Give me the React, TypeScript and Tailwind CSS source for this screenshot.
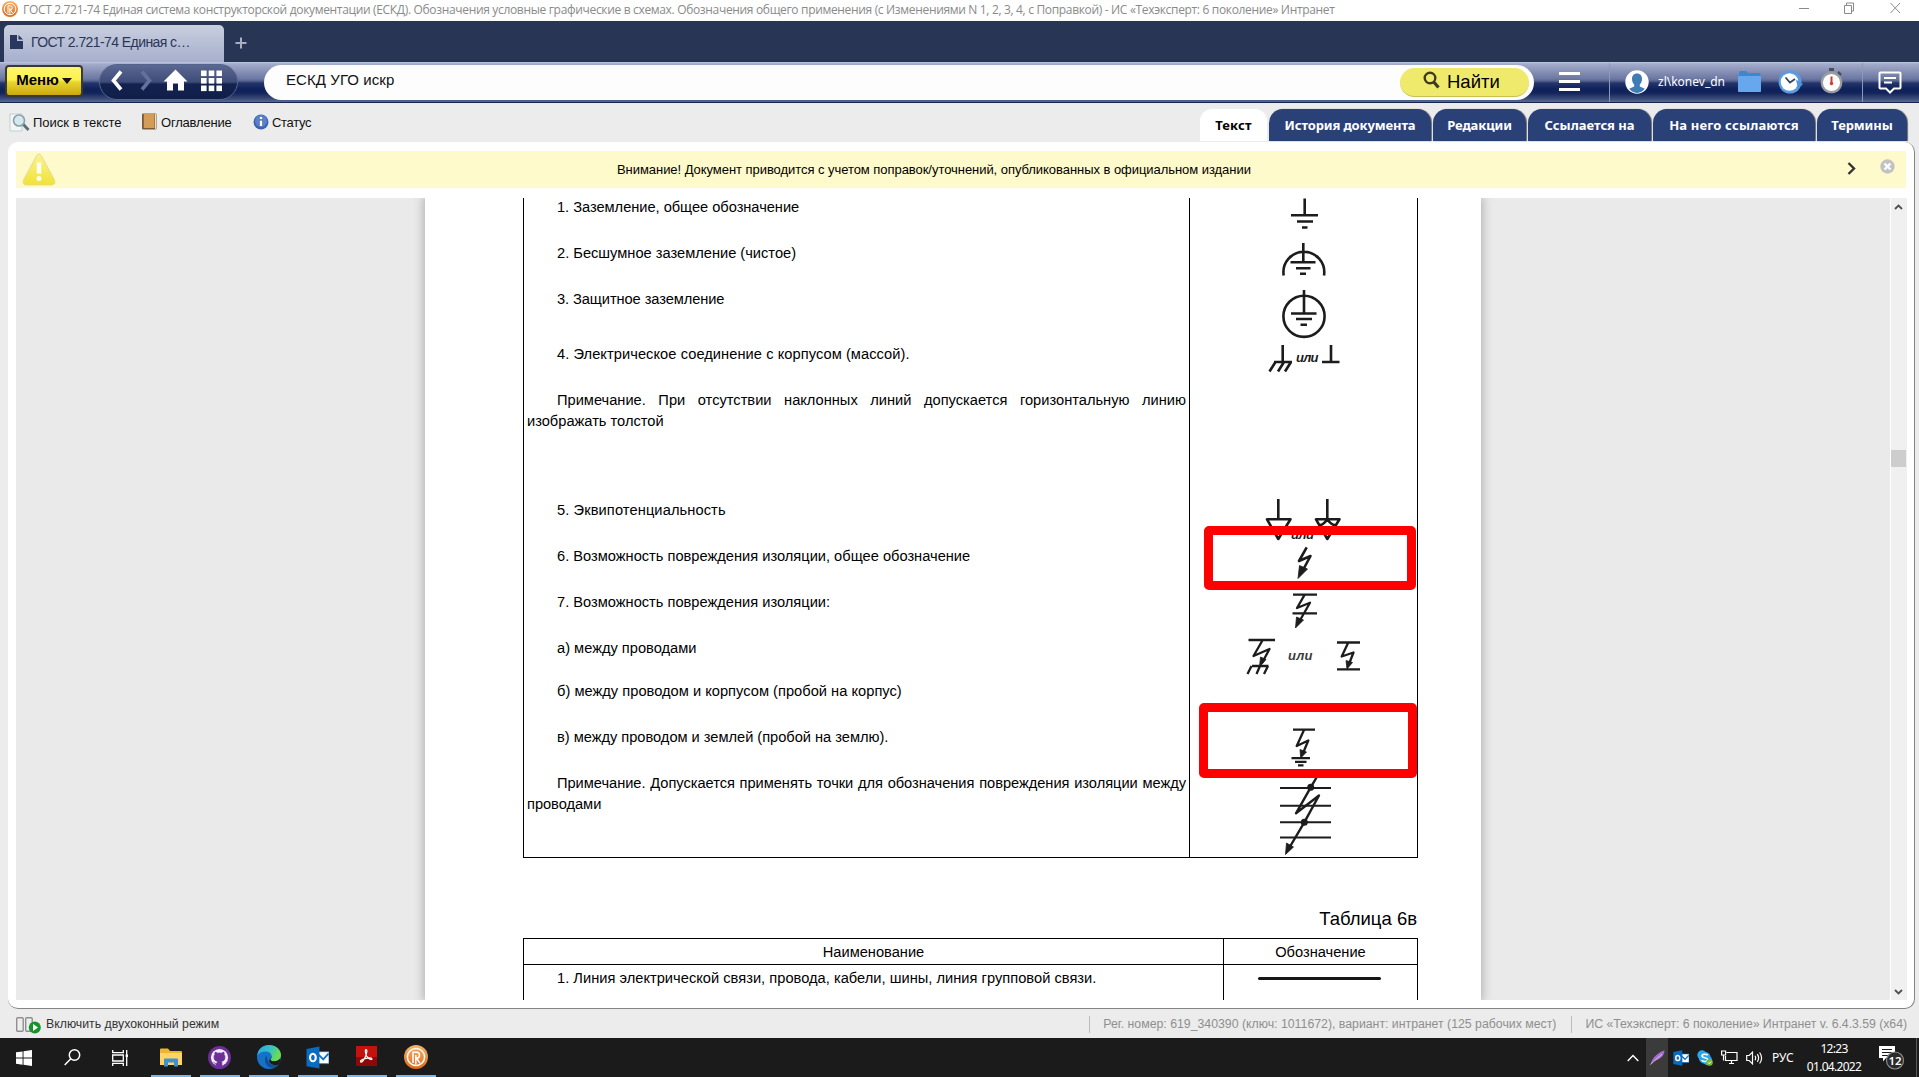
import type { ReactNode } from "react";

const arial = "font-['Liberation_Sans',Arial,sans-serif]";
const noto = "font-['Noto_Sans',sans-serif]";

function BrandOrb({ size }: { size: number }) {
  return (
    <svg width={size} height={size} viewBox="0 0 24 24" className="block shrink-0">
      <defs>
        <linearGradient id="orb" x1="0" y1="0" x2="0" y2="1">
          <stop offset="0" stopColor="#f6b46c" />
          <stop offset="1" stopColor="#dd6a1c" />
        </linearGradient>
      </defs>
      <circle cx="12" cy="12" r="12" fill="url(#orb)" />
      <circle cx="12" cy="12" r="8.600" fill="none" stroke="#fff" strokeWidth="1.500" />
      <path d="M9 18V7.300h3.600a2.900 2.900 0 0 1 0 5.800H11.500M12.600 13.100l3.200 5M11.800 10v9.500" fill="none" stroke="#fff" strokeWidth="1.500" />
    </svg>
  );
}

function TitleBar() {
  return (
    <div className="flex h-[21px] items-center bg-white">
      <div className="ml-[2px] mb-[3px]"><BrandOrb size={16} /></div>
      <div className="ml-[5px] mb-[2px] whitespace-nowrap font-['Open_Sans',sans-serif] text-[12px] leading-[18px] tracking-[-0.33px] text-[#8a8a8a]">
        ГОСТ 2.721-74 Единая система конструкторской документации (ЕСКД). Обозначения условные графические в схемах. Обозначения общего применения (с Изменениями N 1, 2, 3, 4, с Поправкой) - ИС «Техэксперт: 6 поколение» Интранет
      </div>
      <svg className="ml-auto mr-[18px] mb-[5px] block" width="102" height="12" viewBox="0 0 102 12" fill="none" stroke="#8a8a8a" strokeWidth="1">
        <path d="M0 6.500h10M45.500 3.500h7v8h-7zM47.500 3.500v-2.500h7v8h-2M91.500 1l9.500 10M101 1l-9.500 10" />
      </svg>
    </div>
  );
}

function BrowserTabs() {
  return (
    <div className="flex h-[41px] items-end bg-[#283554]">
      <div className="ml-[4px] flex h-[37px] w-[220px] items-center rounded-t-[5px] bg-linear-to-b from-[#c9cfe0] to-[#a6afcc]">
        <svg className="ml-[6px] mb-[3px] block" width="13" height="14" viewBox="0 0 13 14">
          <path d="M0 0h7v6h6v8H0z" fill="#2b3760" />
          <path d="M8.500 0L13 4.500H8.500z" fill="#2b3760" />
        </svg>
        <span className={`${arial} ml-[8px] mb-[3px] whitespace-nowrap text-[14px] tracking-[-0.58px] text-[#2b3656]`}>ГОСТ 2.721-74 Единая с…</span>
      </div>
      <svg className="mb-[13px] ml-[11px] block" width="12" height="12" viewBox="0 0 12 12">
        <path d="M6 0.500v11M0.500 6h11" stroke="#a9afbf" strokeWidth="2" />
      </svg>
    </div>
  );
}

function Toolbar() {
  return (
    <div className="flex h-[41px] items-center border-b border-[#16244c] bg-[linear-gradient(to_bottom,#c3c9dd_0px,#a3abca_2px,#6b77a2_17px,#56638f_19px,#24356c_21px,#10225a_27px,#12245a_31px,#3d4d7b_37px,#5a6a94_40px)]">
      <div className="ml-[5px] mb-[2px] flex h-[32px] w-[78px] shrink-0 items-center justify-center rounded-[4px] border-2 border-[#3b3a30] bg-[linear-gradient(to_bottom,#fdf66a_0%,#fbf150_45%,#e8d42d_55%,#c9a90f_100%)]">
        <span className={`${arial} mb-[2px] text-[15px] font-bold text-black`}>Меню</span>
        <svg className="ml-[3px] mb-[1px] block" width="10" height="6" viewBox="0 0 10 6"><path d="M0 0h10L5 6z" fill="#111" /></svg>
      </div>
      <div className="ml-[16px] h-[36px] w-[139px] shrink-0 rounded-full border border-[#55638f] bg-[linear-gradient(to_bottom,#5b6890_0%,#3e4c7a_50%,#13224e_56%,#101f4a_100%)]">
        <svg className="block" width="137" height="34" viewBox="100 65 137 34">
          <path d="M121 71.500L113.500 80.500L121 89.500" fill="none" stroke="#fff" strokeWidth="3.600" />
          <path d="M142 71.500L149.500 80.500L142 89.500" fill="none" stroke="#65719b" strokeWidth="3.600" />
          <path d="M175.500 69.500L163.500 81.500H167V90.500H173V83.500H178V90.500H184V81.500H187.500Z" fill="#fff" />
          <g fill="#fff">
            <rect x="201" y="70.500" width="5.600" height="5.600" /><rect x="208.700" y="70.500" width="5.600" height="5.600" /><rect x="216.400" y="70.500" width="5.600" height="5.600" />
            <rect x="201" y="78" width="5.600" height="5.600" /><rect x="208.700" y="78" width="5.600" height="5.600" /><rect x="216.400" y="78" width="5.600" height="5.600" />
            <rect x="201" y="85.500" width="5.600" height="5.600" /><rect x="208.700" y="85.500" width="5.600" height="5.600" /><rect x="216.400" y="85.500" width="5.600" height="5.600" />
          </g>
        </svg>
      </div>
      <div className="ml-[26px] flex h-[35px] w-[1270px] shrink-0 items-center rounded-full bg-[#fdfdfd]">
        <span className={`${arial} ml-[22px] mb-[3px] text-[15px] tracking-[0.08px] text-[#111]`}>ЕСКД УГО искр</span>
        <div className="ml-auto mr-[5px] flex h-[29px] w-[129px] items-center rounded-full border-b border-[#c9c052] bg-[#efea6b]">
          <svg className="ml-[23px] mb-[4px] block" width="17" height="18" viewBox="0 0 17 18" fill="none" stroke="#3d3c1c">
            <circle cx="7" cy="7" r="5.300" strokeWidth="2.400" />
            <path d="M10.800 11L15.500 16.500" strokeWidth="3.200" />
          </svg>
          <span className={`${arial} ml-[7px] pt-[1px] text-[18.500px] text-black`}>Найти</span>
        </div>
      </div>
      <svg className="ml-[25px] mb-[1px] block shrink-0" width="21" height="19" viewBox="0 0 21 19"><path d="M0 1.500h21M0 9.500h21M0 17.500h21" stroke="#fff" strokeWidth="3" /></svg>
      <div className="ml-[29px] h-[39px] w-px bg-[#8d97b8]" />
      <svg className="ml-[15px] block shrink-0" width="24" height="24" viewBox="0 0 24 24">
        <circle cx="12" cy="12" r="11.700" fill="#fff" />
        <path d="M12 3.500c3.400 0 5 2.400 5 5.500 0 2.300-1 4.300-2.200 5.500v2l5 2.200A11.200 11.200 0 0 1 12 23a11.200 11.200 0 0 1-7.800-4.300l5-2.200v-2C8 13.300 7 11.300 7 9c0-3.100 1.600-5.500 5-5.500z" fill="#3f7cb5" />
      </svg>
      <span className={`${noto} ml-[9px] w-[68px] text-[12px] text-white`}>zl\konev_dn</span>
      <svg className="ml-[12px] mb-[1px] block shrink-0" width="23" height="21" viewBox="0 0 23 21">
        <path d="M1 1.500Q1 0 2.500 0H8l2 2h11.500q1 0 1 1V10H1z" fill="#3d87cf" />
        <rect x="0" y="5" width="23" height="16" rx="0.800" fill="#66a7ee" />
      </svg>
      <svg className="ml-[17px] mb-[1px] block shrink-0" width="25" height="24" viewBox="0 0 25 24">
        <circle cx="12" cy="12" r="11.500" fill="#5a9ce2" />
        <circle cx="11.500" cy="12" r="8.800" fill="#fff" />
        <path d="M18 9.500L25 14L20 19z" fill="#4e93df" />
        <path d="M7.500 7.500L12 12.500L17 9" fill="none" stroke="#33465e" strokeWidth="1.800" />
      </svg>
      <svg className="ml-[17px] mb-[2px] block shrink-0" width="23" height="26" viewBox="0 0 23 26">
        <rect x="9" y="0" width="5" height="3" fill="#4a4e58" />
        <path d="M18 4l3 3" stroke="#4a4e58" strokeWidth="2.500" />
        <circle cx="11.500" cy="14.500" r="10.800" fill="#9b9c9f" />
        <circle cx="11.500" cy="14.500" r="8.600" fill="#fdfdfd" />
        <path d="M11.500 8.500v6" stroke="#cf3a34" strokeWidth="2" />
        <circle cx="11.500" cy="15.500" r="1.700" fill="#cf3a34" />
      </svg>
      <div className="ml-[19px] h-[39px] w-px bg-[#8d97b8]" />
      <svg className="ml-[15px] block shrink-0" width="24" height="23" viewBox="0 0 24 23" fill="none" stroke="#fff">
        <path d="M2.500 1.500h19q1 0 1 1v14q0 1-1 1H16L12 21.500L8 17.500H2.500q-1 0-1-1v-14q0-1 1-1z" strokeWidth="2" />
        <path d="M6 7h12M6 11.500h8" strokeWidth="2" />
      </svg>
    </div>
  );
}

function DocTab({ label, className, tracking }: { label: string; className: string; tracking: string }) {
  return (
    <div className={`flex h-[32px] items-center justify-center rounded-t-[14px] bg-[#2a4177] text-white shadow-[1px_0_1px_#6b6b6b] ${className}`}>
      <span className={`${noto} whitespace-nowrap text-[13px] font-bold leading-[18px] ${tracking}`}>{label}</span>
    </div>
  );
}

function SubBar() {
  return (
    <div className={`flex h-[38px] bg-[#ececec] ${arial} text-[13px] text-[#111]`}>
      <div className="flex flex-1 items-center pt-[1px]">
        <svg className="ml-[9px] block" width="21" height="19" viewBox="0 0 21 19">
          <path d="M1 1h12v17H1z" fill="#f3f7f7" stroke="#c3cfcf" />
          <path d="M14 11l5.500 6" stroke="#5f6c75" strokeWidth="2.800" />
          <circle cx="10" cy="7.500" r="5.500" fill="#d5e8ee" stroke="#8ba0a8" strokeWidth="1.600" />
        </svg>
        <span className="ml-[3px] w-[90px]">Поиск в тексте</span>
        <svg className="ml-[19px] mb-[2px] block" width="15" height="17" viewBox="0 0 15 17">
          <rect x="0" y="0.500" width="14.500" height="16" rx="1" fill="#7a5a36" />
          <rect x="1.800" y="1" width="10.700" height="14" fill="#d59c56" />
          <path d="M13.500 1v15" stroke="#e8e0d0" strokeWidth="1" />
        </svg>
        <span className="ml-[4px] w-[72px] tracking-[-0.2px]">Оглавление</span>
        <svg className="ml-[20px] mb-[2px] block" width="16" height="16" viewBox="0 0 16 16">
          <circle cx="8" cy="8" r="7.500" fill="#3d62b0" />
          <circle cx="8" cy="7" r="6" fill="#5b80c9" />
          <path d="M8 3v2M8 6.800V12" stroke="#fff" strokeWidth="2.200" />
        </svg>
        <span className="ml-[3px] tracking-[-0.3px]">Статус</span>
      </div>
      <div className="mr-[12px] flex gap-[2px] self-end">
        <div className="flex h-[32px] w-[67px] items-center justify-center rounded-t-[12px] bg-white text-black">
          <span className={`${noto} text-[13px] font-bold leading-[18px] tracking-[0.2px]`}>Текст</span>
        </div>
        <DocTab label="История документа" className="w-[162px]" tracking="tracking-[-0.12px]" />
        <DocTab label="Редакции" className="w-[93px]" tracking="tracking-[-0.1px]" />
        <DocTab label="Ссылается на" className="w-[123px]" tracking="tracking-[0px]" />
        <DocTab label="На него ссылаются" className="w-[162px]" tracking="tracking-[0.15px]" />
        <DocTab label="Термины" className="w-[90px]" tracking="tracking-[-0.1px]" />
      </div>
    </div>
  );
}

function Banner() {
  return (
    <div className="mx-[8px] flex h-[37px] items-center bg-[#fffacb]">
      <svg className="ml-[6px] block shrink-0" width="34" height="33" viewBox="0 0 34 33">
        <defs>
          <linearGradient id="warn" x1="0" y1="0" x2="0" y2="1">
            <stop offset="0" stopColor="#f8f493" /><stop offset="1" stopColor="#f2e235" />
          </linearGradient>
        </defs>
        <path d="M14.500 3Q17-1 19.500 3L32.500 27Q34 32 29 32H5Q0 32 1.500 27Z" fill="url(#warn)" stroke="#e5dd8a" />
        <path d="M17 9.500v11" stroke="#fffef0" strokeWidth="4.600" />
        <circle cx="17" cy="25.500" r="2.500" fill="#fffef0" />
      </svg>
      <span className={`${arial} flex-1 whitespace-nowrap pl-[561px] pt-[1px] text-[13px] tracking-[-0.05px] text-black`}>
        Внимание! Документ приводится с учетом поправок/уточнений, опубликованных в официальном издании
      </span>
      <svg className="mb-[2px] block" width="9" height="13" viewBox="0 0 9 13"><path d="M1.500 1L7 6.500L1.500 12" fill="none" stroke="#333" strokeWidth="2.400" /></svg>
      <svg className="ml-[24px] mr-[11px] mb-[6px] block" width="15" height="15" viewBox="0 0 15 15">
        <circle cx="7.500" cy="7.500" r="7.200" fill="#c2c2c2" />
        <path d="M4.500 4.500l6 6M10.500 4.500l-6 6" stroke="#fff" strokeWidth="2.400" />
      </svg>
    </div>
  );
}

function Or({ x, y, fill = "#1c1c1c", w }: { x: number; y: number; fill?: string; w: number }) {
  return (
    <text x={x} y={y} fontFamily="'Liberation Sans', Arial, sans-serif" fontSize="13" fontWeight="700" fontStyle="italic" textLength={w} fill={fill} stroke="none">
      или
    </text>
  );
}

function Symbols() {
  return (
    <svg className="block" width="227" height="659" viewBox="1190 198 227 659" fill="none" stroke="#1c1c1c" strokeWidth="2.600" strokeLinejoin="round">
      <path d="M1304.700 198.500V215.300M1291 215.300H1318M1297 221.500H1313M1302 227.500H1307.500" />
      <path d="M1303.300 243V262.300M1290.500 262.300H1315.500M1296 268.300H1310.500M1300 273.700H1306M1283.700 275.500A20.400 20.600 0 1 1 1324 275.500" />
      <circle cx="1304" cy="316.300" r="20.600" />
      <path d="M1304 290V313.500M1291 313.500H1316.500M1296 319H1312M1300.500 324.800H1307" />
      <path d="M1282.700 345V362M1274 362H1292M1275.500 362L1269.500 371.500M1284 362L1278 371.500M1291 362L1285 371.500M1331 345V362M1322 362H1339.500" />
      <Or x={1296} y={362} w={22.500} />

      <path d="M1278.300 499V519M1267 519.300H1290.500L1278.300 539ZM1327.300 499V519M1316 519.300H1339.500L1327.300 539ZM1320 525Q1323 525 1327.300 519.500Q1331.500 525 1335 525" />
      <Or x={1291} y={538.500} w={23} />

      <path d="M1306.700 547.300L1299 561L1310.500 556L1303 570" />
      <path d="M1298 578.500L1299.500 565.500L1307.500 569Z" fill="#1c1c1c" strokeWidth="0.800" />

      <path d="M1293 594.700H1317M1292.500 613.300H1317M1304.700 594.700L1297 608L1310 602.700L1299 622" strokeWidth="2.300" />
      <path d="M1295.500 628L1296.500 617L1303.500 620Z" fill="#1c1c1c" strokeWidth="0.800" />

      <path d="M1248.500 640H1275M1262.700 640L1253.500 656L1269.500 649L1262 663M1252 666H1268.500M1251.500 666L1247.500 674M1260 666L1256.500 674M1268 666L1264 674" strokeWidth="2.300" />
      <path d="M1259.500 667L1260.500 657L1266 659.500Z" fill="#1c1c1c" strokeWidth="0.800" />
      <Or x={1288} y={659.500} w={24.500} fill="#3c3c3c" />
      <path d="M1337 642.500H1360M1348.300 642.500L1341.700 656.500L1353.500 652.500L1349 664M1337 669.300H1360" strokeWidth="2.300" />
      <path d="M1347 669L1346 660.500L1352.500 662.500Z" fill="#1c1c1c" strokeWidth="0.800" />

      <path d="M1293 729.700H1315M1304 730L1296.700 746L1308.300 740.500L1303.500 752M1291.500 758.200H1310M1295 761.800H1306.500M1298 765.300H1303.500" strokeWidth="2.300" />
      <path d="M1300.700 758L1300 749.500L1306.500 752Z" fill="#1c1c1c" strokeWidth="0.800" />

      <path d="M1280 788H1331M1280 805.700H1331M1280 822.300H1331M1280 837.500H1331" strokeWidth="2.100" />
      <path d="M1318 775L1310.700 787.300L1296 813.300L1319 795.500L1304.300 822.300L1288 850" strokeWidth="2.400" />
      <circle cx="1310.700" cy="787.300" r="3.500" fill="#1c1c1c" stroke="none" />
      <circle cx="1304.300" cy="822.300" r="3.500" fill="#1c1c1c" stroke="none" />
      <path d="M1285.500 854.500L1286.500 843L1293.500 847Z" fill="#1c1c1c" strokeWidth="0.800" />
    </svg>
  );
}

function P({ children, className = "" }: { children: ReactNode; className?: string }) {
  return <p className={`indent-[30px] ${className}`}>{children}</p>;
}

function Page() {
  return (
    <div className={`${arial} relative h-[802px] w-[1056px] shrink-0 overflow-hidden bg-white pl-[98px] text-[14.65px] leading-[21px] text-black shadow-[0_0_9px_2px_#b4b4b4]`}>
      <div className="flex h-[660px] w-[895px] border-x border-b border-black">
        <div className="w-[666px] shrink-0 border-r border-black px-[3px]">
          <P className="-mt-[1px] tracking-[-0.03px]">1. Заземление, общее обозначение</P>
          <P className="mt-[25px]">2. Бесшумное заземление (чистое)</P>
          <P className="mt-[25px] tracking-[-0.08px]">3. Защитное заземление</P>
          <P className="mt-[34px] tracking-[0.06px]">4. Электрическое соединение с корпусом (массой).</P>
          <P className="mt-[25px] text-justify">Примечание. При отсутствии наклонных линий допускается горизонтальную линию изображать толстой</P>
          <P className="mt-[68px] tracking-[0.1px]">5. Эквипотенциальность</P>
          <P className="mt-[25px]">6. Возможность повреждения изоляции, общее обозначение</P>
          <P className="mt-[25px]">7. Возможность повреждения изоляции:</P>
          <P className="mt-[25px]">а) между проводами</P>
          <P className="mt-[22px] tracking-[0.02px]">б) между проводом и корпусом (пробой на корпус)</P>
          <P className="mt-[25px] tracking-[-0.02px]">в) между проводом и землей (пробой на землю).</P>
          <P className="mt-[25px] text-justify tracking-[-0.03px]">Примечание. Допускается применять точки для обозначения повреждения изоляции между проводами</P>
        </div>
        <Symbols />
      </div>
      <div className="mt-[49px] w-[894px] text-right text-[18.500px] leading-[24px]">Таблица 6в</div>
      <div className="mt-[7px] grid w-[895px] grid-cols-[700px_193px] border border-black">
        <div className="h-[26px] border-b border-r border-black pt-[3px] text-center">Наименование</div>
        <div className="h-[26px] border-b border-black pt-[3px] text-center">Обозначение</div>
        <div className="h-[60px] border-r border-black px-[3px] pt-[3px]"><P className="tracking-[0.02px]">1. Линия электрической связи, провода, кабели, шины, линия групповой связи.</P></div>
        <div className="flex h-[60px] items-start justify-center pr-[2px] pt-[12px]"><div className="h-[3px] w-[123px] rounded-full bg-[#161616]" /></div>
      </div>
      <div className="absolute left-[779px] top-[328px] h-[64px] w-[212px] rounded-[5px] border-[9px] border-[#fe0000]" />
      <div className="absolute left-[774px] top-[505px] h-[75px] w-[218px] rounded-[5px] border-[9px] border-[#fe0000]" />
    </div>
  );
}

function Scrollbar() {
  return (
    <div className="flex w-[17px] flex-col items-center border-l border-white bg-[#f0f0f0] pr-[1px]">
      <svg className="mt-[6px] block" width="9" height="6" viewBox="0 0 9 6"><path d="M1 5l3.500-3.500L8 5" fill="none" stroke="#505050" strokeWidth="1.800" /></svg>
      <div className="mt-[240px] h-[17px] w-[15px] bg-[#cdcdcd]" />
      <svg className="mb-[5px] mt-auto block" width="9" height="6" viewBox="0 0 9 6"><path d="M1 1l3.500 3.500L8 1" fill="none" stroke="#505050" strokeWidth="1.800" /></svg>
    </div>
  );
}

function StatusBar() {
  return (
    <div className={`${arial} flex h-[29px] items-center pt-[2px] text-[12.3px] text-[#8f8f8f]`}>
      <svg className="ml-[16px] block" width="25" height="18" viewBox="0 0 25 18">
        <rect x="0.700" y="1.700" width="6.500" height="13.500" rx="1" fill="#eee" stroke="#8f8f8f" strokeWidth="1.400" />
        <rect x="9.700" y="1.700" width="6.500" height="13.500" rx="1" fill="#eee" stroke="#8f8f8f" strokeWidth="1.400" />
        <circle cx="18.800" cy="11.500" r="6" fill="#16942a" />
        <path d="M17 8l5 3.500l-5 3.500z" fill="#fff" />
      </svg>
      <span className="ml-[5px] text-[#333]">Включить двухоконный режим</span>
      <div className="ml-auto h-[17px] w-px bg-[#bcbcbc]" />
      <span className="ml-[13px] whitespace-nowrap">Рег. номер: 619_340390 (ключ: 1011672), вариант: интранет (125 рабочих мест)</span>
      <div className="ml-[15px] h-[17px] w-px bg-[#bcbcbc]" />
      <span className="ml-[13px] mr-[12px] whitespace-nowrap tracking-[-0.04px]">ИС «Техэксперт: 6 поколение» Интранет v. 6.4.3.59 (x64)</span>
    </div>
  );
}

function AppButton({ children, className = "" }: { children: ReactNode; className?: string }) {
  return (
    <div className={`flex h-[39px] w-[49px] flex-col items-center ${className}`}>
      <div className="flex flex-1 items-center pt-px">{children}</div>
      <div className="h-[2px] w-[40px] bg-[#76b9ed]" />
    </div>
  );
}

function OutlookIcon({ size }: { size: number }) {
  return (
    <svg width={size} height={size} viewBox="0 0 24 24" className="block">
      <rect x="11" y="6" width="13" height="12.500" fill="#fff" stroke="#1276c8" strokeWidth="0.800" />
      <path d="M12.500 8.500l5.500 5.500l5.500-6" fill="none" stroke="#1276c8" strokeWidth="2" />
      <path d="M0.500 3L14 0.500v23L0.500 21z" fill="#0a6cc0" />
      <ellipse cx="7.200" cy="12" rx="3" ry="3.900" fill="none" stroke="#fff" strokeWidth="2.200" />
    </svg>
  );
}

function Taskbar() {
  return (
    <div className="flex h-[39px] items-center bg-[#1b1b1b]">
      <svg className="ml-[16px] block" width="16" height="16" viewBox="0 0 16 16" fill="#fff">
        <path d="M0 2.300L6.600 1.400V7.600H0zM7.500 1.200L16 0v7.600H7.500zM0 8.500h6.600v6.200L0 13.800zM7.500 8.500H16V16l-8.500-1.200z" />
      </svg>
      <svg className="ml-[32px] block" width="17" height="17" viewBox="0 0 17 17" fill="none" stroke="#fff" strokeWidth="1.500">
        <circle cx="10.500" cy="6" r="5.200" /><path d="M6.800 9.700L0.700 16" />
      </svg>
      <svg className="ml-[31px] mr-[17px] block" width="17" height="16" viewBox="0 0 17 16" fill="none" stroke="#fff" strokeWidth="1.300">
        <path d="M0.700 0v2.700h10.600V0M0.700 16v-2.700h10.600V16M0.700 5h10.600v6H0.700zM14.700 0v16" />
        <rect x="13.600" y="4.500" width="2.400" height="2.400" fill="#fff" stroke="none" />
      </svg>
      <AppButton>
        <svg width="22" height="19" viewBox="0 0 22 19" className="block">
          <path d="M0 1.500Q0 0.500 1 0.500h7l2 2.500h11q1 0 1 1V17H0z" fill="#f0b52e" />
          <path d="M0 5h22v12H0z" fill="#fcd566" />
          <path d="M4 18.500v-7q0-1 1-1h12q1 0 1 1v7h-4v-4H8v4z" fill="#3e92d2" />
        </svg>
      </AppButton>
      <AppButton>
        <svg width="23" height="23" viewBox="0 0 24 24" className="block">
          <circle cx="12" cy="12" r="12" fill="#6c2f96" />
          <circle cx="12" cy="12" r="9" fill="#f3ecf8" />
          <path d="M9.500 21.500v-3c-2.500.5-3-1-3.500-2M14.500 21.500v-3.500c0-1-.2-1.500-.6-2 2.300-.3 3.800-1.300 3.800-4.500 0-1.200-.4-2-1-2.700.2-.8.200-1.600-.1-2.300-1 0-1.800.5-2.500 1a9 9 0 0 0-4.200 0c-.7-.5-1.500-1-2.500-1-.3.700-.3 1.500-.1 2.300-.6.700-1 1.500-1 2.700 0 3.200 1.500 4.200 3.800 4.500-.4.500-.6 1-.6 2v3.500z" fill="#6c2f96" stroke="#6c2f96" strokeWidth="0.800" />
        </svg>
      </AppButton>
      <AppButton>
        <svg width="24" height="24" viewBox="0 0 24 24" className="block">
          <defs>
            <linearGradient id="edgeTop" x1="0" y1="0" x2="1" y2="0.400">
              <stop offset="0" stopColor="#2aa6e6" /><stop offset="0.550" stopColor="#35c1c8" /><stop offset="1" stopColor="#6fdc4c" />
            </linearGradient>
          </defs>
          <circle cx="12" cy="12" r="12" fill="#1473c8" />
          <path d="M0.200 10.500C1 4 6 0 12 0c7 0 12 4.800 12 10 0 3.700-2.800 6.200-6.500 6.200-2.700 0-4-1-4-1.800 0-.7 1.200-1.300 1.200-3.200C14.700 8.500 12 6.500 8.500 6.500 4.500 6.500 1.500 8.500 0.200 10.500z" fill="url(#edgeTop)" />
          <path d="M9.500 10.500c-2.500 2.800-2 8 1.500 11 3.500 2.500 8.500 1.500 11-2.500-3.500 1.800-8 1.200-10-1.500-1.700-2.200-1.500-4.700-2.500-7z" fill="#124f97" />
          <path d="M14.700 11c0 2-1.300 2.700-1.300 3.500 0 .9 1.500 1.800 4 1.800 3 0 5-1.300 6-3.200L23.500 16l-2 3.500c-4 1.500-8.500 0-9.500-3.500z" fill="#1b1b1b" />
        </svg>
      </AppButton>
      <AppButton><OutlookIcon size={23} /></AppButton>
      <AppButton>
        <svg width="21" height="20" viewBox="0 0 21 20" className="mb-[2px] block">
          <rect width="21" height="20" fill="#c4120f" />
          <rect y="11" width="21" height="9" fill="#8e0807" />
          <path d="M10 3.500c1.600 0 .8 4.500-1 8-1.200 2.500-2.800 4.600-4 4.600-1.800-.6.800-3 5-3.800 3-.6 6-.6 6 .6 0 1.400-3.400.2-5-2.200C9.700 8.600 8.600 3.500 10 3.500z" fill="none" stroke="#fff" strokeWidth="1.200" />
        </svg>
      </AppButton>
      <AppButton><BrandOrb size={24} /></AppButton>

      <div className={`${noto} ml-auto flex h-[39px] items-center text-[12px] text-white`}>
        <svg className="mr-[7px] block" width="12" height="8" viewBox="0 0 12 8"><path d="M0.700 7L6 1.500L11.300 7" fill="none" stroke="#fff" strokeWidth="1.400" /></svg>
        <div className="flex h-[39px] w-[22px] items-center justify-center bg-[#3b3b3b]">
          <svg width="15" height="15" viewBox="0 0 15 15" className="block">
            <path d="M0.500 14.500C2 8 8 2 14.500 0.500c0 4-3 9-11 10.500z" fill="#a66fcc" />
            <path d="M0.500 14.500L12 4" stroke="#e0c6f2" strokeWidth="0.900" />
          </svg>
        </div>
        <div className="ml-[5px]"><OutlookIcon size={16} /></div>
        <svg className="ml-[8px] block" width="16" height="16" viewBox="0 0 16 16">
          <circle cx="5" cy="5" r="4.700" fill="#28a8ea" /><circle cx="10.500" cy="10.500" r="4.700" fill="#28a8ea" /><circle cx="7.700" cy="7.700" r="6" fill="#28a8ea" />
          <path d="M10.700 5.300C9.500 3.800 5 3.700 5 5.900c0 2.300 5.700 1.300 5.700 3.800 0 2.300-4.700 2.200-6 .4" fill="none" stroke="#fff" strokeWidth="1.600" />
          <circle cx="12.500" cy="12.500" r="3.300" fill="#7ab53c" /><path d="M11 12.500l1.200 1.200l2-2.200" fill="none" stroke="#fff" strokeWidth="1" />
        </svg>
        <svg className="ml-[8px] block" width="17" height="16" viewBox="0 0 17 16" fill="none" stroke="#fff" strokeWidth="1.200">
          <path d="M5.500 2.500h10.500v8H4.500V6M8 13.500h5M10.500 10.500v3M0.600 1h4v4h-4zM2.500 5v5.500" />
        </svg>
        <svg className="ml-[8px] block" width="17" height="14" viewBox="0 0 17 14" fill="none" stroke="#fff" strokeWidth="1.200">
          <path d="M0.700 4.500h2.500L6.500 1.200v11.600L3.200 9.500H0.700zM9 4.800q1.300 2.200 0 4.400M11.300 3.200q2.600 3.800 0 7.600M13.600 1.500q4 5.500 0 11" />
        </svg>
        <span className="ml-[9px] w-[22px]">РУС</span>
        <div className="ml-[9px] flex w-[62px] flex-col items-center text-[12px] leading-[18px] tracking-[-0.7px]">
          <span>12:23</span>
          <span>01.04.2022</span>
        </div>
        <svg className="ml-[14px] block" width="26" height="25" viewBox="0 0 26 25">
          <path d="M0 1h16v12H7l-3 3.500V13H0z" fill="#fff" />
          <path d="M3 4.500h10M3 7.500h10M3 10.500h10" stroke="#1b1b1b" strokeWidth="1.100" />
          <circle cx="16" cy="15.500" r="8.500" fill="#2b2b2b" stroke="#8c8c8c" strokeWidth="1.200" />
          <text x="16" y="19.700" textAnchor="middle" fontFamily="'Noto Sans', sans-serif" fontSize="11.500" fontWeight="600" fill="#fff">12</text>
        </svg>
        <div className="ml-[11px] mr-[2px] h-[39px] w-px bg-[#5a5a5a]" />
      </div>
    </div>
  );
}

export default function App() {
  return (
    <div className="flex h-[1077px] w-[1919px] flex-col overflow-hidden bg-[#ececec]">
      <TitleBar />
      <BrowserTabs />
      <Toolbar />
      <SubBar />
      <div className="ml-[8px] mt-[1px] flex h-[867px] w-[1907px] flex-col rounded-[10px] border-b border-r border-[#858585] bg-white pt-[9px]">
        <Banner />
        <div className="mx-[8px] mt-[10px] flex h-[802px] w-[1891px] overflow-hidden bg-[#eaeaea]">
          <div className="flex flex-1 overflow-hidden pl-[409px]"><Page /></div>
          <Scrollbar />
        </div>
      </div>
      <StatusBar />
      <Taskbar />
    </div>
  );
}
